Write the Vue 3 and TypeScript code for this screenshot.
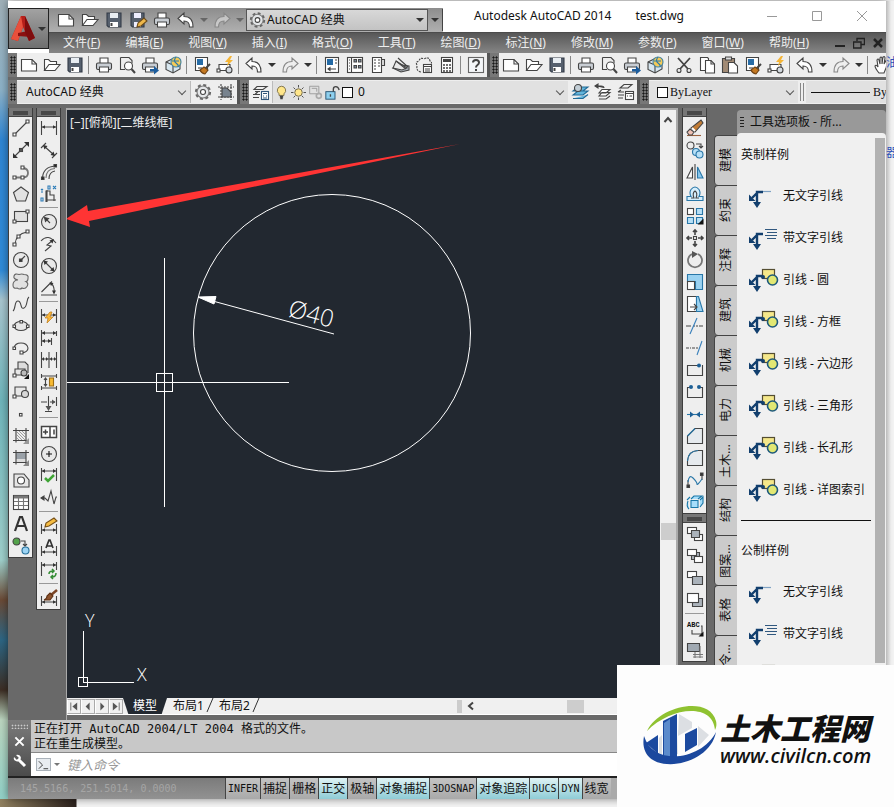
<script setup lang="ts">
import { ref } from 'vue'

const dim = '<path d="M1.500 2v14M16.500 2v14M2 8h14"/><path d="M2 8l3-1.800v3.600zM16 8l-3-1.800v3.600z" fill="#333" stroke="none"/>'
const dimLow = '<path d="M1.500 7v10M16.500 7v10M2 13h14"/><path d="M2 13l3-1.800v3.600zM16 13l-3-1.800v3.600z" fill="#333" stroke="none"/>'
const frame = '<path d="M4 1v14.500M14 1v14.500M1 3.500h16M1 13.500h16"/>'
const printer = '<path d="M5 7V2h8v5" fill="#fff"/><rect x="1.500" y="7" width="15" height="6.500" rx="1.500" fill="#c9ced4"/><path d="M4.500 11h9v5h-9z" fill="#fff"/>'
const leader = '<path d="M14 8H8v11M9 8L3 14" stroke="#123f6e" stroke-width="2.400"/><path d="M0 17V10.500l6.500 6.500zM8 24l-4-6h8z" fill="#123f6e" stroke="none"/>'
const boxA = '<rect x="1.500" y="2.500" width="9" height="6" fill="#fff"/>'
const boxB = '<rect x="8.500" y="9.500" width="8" height="6" fill="#fff"/>'

const icons: Record<string, string> = {
  new: '<path d="M1.500 3.500H12l4.500 4.500v7h-15z" fill="#fff"/><path d="M12 3.500V8h4.500"/>',
  open: '<path d="M1.500 14.500v-11h4l2 2h6v3" fill="#fff"/><path d="M1.500 14.500L6 8.500h11l-5 6z" fill="#fff"/>',
  save: '<path d="M2 2h14v14H3.500L2 14.500z" fill="#56606e" stroke="#333b47"/><path d="M5 2h8v5H5z" fill="#e8edf2" stroke="none"/><path d="M5 11h8v5H5z" fill="#fff" stroke="none"/><path d="M6.500 12v3" stroke-width="2"/>',
  saveas: '<path d="M2 2h13v14H3.500L2 14.500z" fill="#56606e" stroke="#333b47"/><path d="M5 2h7v5H5zM5 11h7v5H5z" fill="#eef" stroke="none"/><path d="M8 16l1-4 6-5 3 3-6 5z" fill="#eeb74a" stroke="#6b4b1c"/>',
  print: printer,
  preview: '<path d="M2.500 1.500H11l3 3v3M2.500 1.500v12H7" fill="none"/><circle cx="10.500" cy="10" r="4" fill="#fff"/><path d="M13.500 13l3.500 4" stroke-width="2"/>',
  publish: printer + '<path d="M9 13h4v-3l5 4.500-5 4v-3H9z" fill="#1c5c9c" stroke="none"/>',
  cube: '<path d="M2 6l7-3.500 7 2.500v8l-7 4-7-3.500z" fill="#d7e6ef"/><path d="M2 6l7 3v8M9 9l3-1.500"/><circle cx="12" cy="6" r="5" fill="#f5ca57" stroke="#4183a1"/><path d="M12 1q-3 4 0 6t2 4M8 5h7" stroke="#287aac"/>',
  match: '<path d="M2.500 1.500h12v13h-12z" fill="#fff"/><path d="M4 3h6v6H4z" fill="#276ca6" stroke="none"/><path d="M5 12h4"/><path d="M17 8l-5 5" stroke-width="2"/><path d="M11 11l4 3-3 4q-4-1-5-4z" fill="#c47820" stroke="#704315"/>',
  blockedit: '<path d="M3 8.500h11v6H3z" fill="#fff"/><circle cx="13" cy="14" r="3" fill="#d4dae0"/><rect x="1" y="13" width="3" height="3" fill="#fff"/><path d="M14 0l-5 6h3l-1 4 6-6h-3l2-4z" fill="#f5b536" stroke="none"/>',
  undo: '<path d="M1 7.500L7 2v3.500c6 0 9 3.500 9 10.500h-3.500c0-4.500-1.500-6-5.500-6V13z" fill="#fff"/>',
  redo: '<path d="M17 7.500L11 2v3.500c-6 0-9 3.500-9 10.500h3.500c0-4.500 1.500-6 5.500-6V13z" fill="#eee" fill-opacity=".5" stroke="#888"/>',
  props: '<rect x="2.500" y="1.500" width="13" height="15" fill="#fff"/><path d="M4 3h6v6H4z" fill="#246aa5" stroke="none"/><path d="M12 4h2M12 7h2M5 13h8M5 13l2-1.500v3z"/>',
  design: '<rect x="1.500" y="1.500" width="15" height="15" fill="#fff"/><path d="M5.500 2v14M3 4h1M3 7h1M3 10h1M3 13h1"/><path d="M8 3.500h2.500V6H8zM12.500 3.500H15V6h-2.500zM8 9.500h2.500V12H8zM12.500 9.500H15V12h-2.500z" fill="#7e91a5"/>',
  palette: '<path d="M3.500 1.500h9v15h-9z" fill="#fff"/><path d="M12.500 3.500h3v6h-3z" fill="#ddd"/><path d="M5 4h2M9 4h2M5 7h2M9 7h2M5 10h2M9 10h2M5 13h2"/>',
  sheets: '<path d="M1 12l9-3 7 1v4l-8 2z" fill="#b0b7bd"/><path d="M4 5l11 7-5 2-9-2z" fill="#e8e8e8"/><path d="M6 2l10 9M4 5l10 8"/>',
  markup: '<path d="M2 9q-2-3 2-4 1-4 5-2 5-3 6 2 3 1 0 4" stroke-dasharray="2 1"/><rect x="8.500" y="8.500" width="8" height="8" fill="#fff"/><path d="M9 10.500h7M10 13h5M10 15h5"/><path d="M2 10q-1 5 4 6" stroke-dasharray="2 1"/>',
  calc: '<rect x="3.500" y="1.500" width="11" height="15" fill="#fff"/><path d="M5 4.500h8" stroke-width="3"/><path d="M5 9h8M5 12h8M5 15h8" stroke-dasharray="2 1" stroke-width="1.500"/>',
  help: '<rect x="1.500" y="1.500" width="15" height="15" fill="#f4f6f8" stroke="#666"/><path d="M6 6.500Q6 4 9 4t3 2.500q0 1.500-1.500 2.500T9 11.500M9 13v2" stroke-width="2"/>',
  cut: '<path d="M3 2l10 11M15 2L5 13" stroke-width="1.800"/><circle cx="4" cy="14.500" r="2"/><circle cx="14" cy="14.500" r="2"/>',
  copyclip: '<path d="M2.500 1.500h7l1 1v12h-8z" fill="#fff"/><path d="M7.500 4.500H13l3.500 3.500v9h-9z" fill="#fff"/><path d="M13 4.500V8h3.500"/>',
  paste: '<path d="M1.500 2.500h12v14h-12z" fill="#a28b75"/><path d="M4.500 1h6v3h-6z" fill="#ddd"/><path d="M7.500 6.500H13l3.500 3.500v7h-9z" fill="#fff"/>',
  pan: '<path d="M5 17q-4-5-4-7 1-2 3 1L3 4q1-2 2 0l1 4V2q1-2 2 0v6l1-7q2-1 2 1l-1 6 3-5q2 0 1 2l-2 7-2 5z" fill="#fff"/>',
  gear: '<circle cx="9" cy="9" r="7" stroke-dasharray="3 2.500" stroke-width="2.200" stroke="#666"/><circle cx="9" cy="9" r="6" fill="#e4e6e8" stroke="#777"/><circle cx="9" cy="9" r="2.500" fill="#fff"/>',
  wssave: '<path d="M1 4h16M1 14h16M4 1v16M14 1v16" stroke-dasharray="2 1"/><path d="M5 5h5l4 4v5H5z" fill="#78838e"/>',
  layers: '<path d="M5 3.500h10l-4 3H2zM3 8.500h5M1 11.500h7M1 14.500h6M3 11.500l3-3"/><rect x="9.500" y="8.500" width="7" height="8" fill="#fff" stroke="#315579"/><path d="M11 10.500h4M11 13h1M14 13h1M11 15h4" stroke="#315579"/>',
  bulb: '<path d="M9 1.500a5 5 0 0 1 3 9v2H6v-2a5 5 0 0 1 3-9z" fill="#ffe68a" stroke="#7b6e48"/><path d="M7 14h4M7.500 16h3" stroke-width="2"/>',
  sun: '<path d="M9 0v3M9 15v3M0 9h3M15 9h3M3 3l2 2M13 13l2 2M15 3l-2 2M3 15l2-2"/><circle cx="9" cy="9" r="4.500" fill="#ffe68a" stroke="#6f6547"/>',
  vpfreeze: '<path d="M2 1.500h11v9H2z" stroke="#999"/><path d="M4.500 4h6v4" stroke="#999"/><circle cx="13" cy="13" r="3" stroke="#aaa" stroke-width="2"/>',
  lock: '<rect x="1" y="8" width="11" height="9" fill="#8ed0ef" stroke="#245272"/><path d="M10 8V5q0-3 3-3t4 4M6.500 11v3" stroke-width="1.600"/>',
  layercur: '<path d="M2 12h10l5-4H7zM2 15.500h10l5-4M2 8h10l5-4H7z" fill="#64b6dc" stroke="#226a96"/><circle cx="7" cy="5" r="3.500" fill="#c3cfd7"/>',
  layerprev: '<path d="M5 13h7l4-3.500H8zM5 16h7l4-3M5 10h7l4-3.500H8z" fill="#fff"/><path d="M1 3h6q3 0 3 2M1 3l3-2v4z" fill="#333"/>',
  layerstate: '<path d="M3 5h8l4-3.500H7zM2 9h5M1 12h6M1 9l3-2M1 15h5"/><rect x="8.500" y="8.500" width="8" height="8" fill="#fff"/><path d="M8.500 10.500h8M10 13h1M12.500 13H15"/>',
  line: '<path d="M3 15L15 3"/><path d="M1 14h3v3H1zM14 1h3v3h-3z" fill="#fff"/>',
  xline: '<path d="M2 16L16 2"/><path d="M1 17v-5l5 5zM17 1v5l-5-5z" fill="#333" stroke="none"/><rect x="7.500" y="7.500" width="3" height="3" fill="#555"/>',
  pline: '<path d="M3 14.500h8q5 0 5-4.500t-5-5" stroke-width="1.800" stroke="#777"/><path d="M1 13h3v3H1zM9 13h3v3H9zM9 3h3v3H9z" fill="#fff"/>',
  polygon: '<path d="M9 2l7.500 5.500L13.500 16h-9L1.500 7.500z" fill="#e2e2e2"/>',
  rect: '<rect x="2.500" y="4.500" width="13" height="10" fill="#e0e0e0"/><path d="M1 13h3v3H1zM14 3h3v3h-3z" fill="#fff"/>',
  arc: '<path d="M3 15Q4 5 15 3"/><path d="M1 14h3v3H1zM14 1h3v3h-3zM5 6h3v3H5z" fill="#fff"/>',
  circle: '<circle cx="9" cy="9" r="7.500" fill="#e9e9e9"/><path d="M9 9l4-4"/><path d="M7.500 8h2.500v2.500H7.500z" fill="#333"/>',
  cloud: '<path d="M6 7Q1 6 2 3t5-1.500q3-1 5 0 5 0 4 4 0 3-2 3 3 2 1 5t-5 1.500q-2 2-5 0-4 1-4-3 0-4 4-5z" fill="#e1e1e1" stroke="#666"/>',
  spline: '<path d="M1 16C4 14 2 6 6 6s2 9 6 7 2-9 5-11"/>',
  ellipse: '<ellipse cx="9" cy="9" rx="7" ry="4.500" fill="#e7e7e7"/><path d="M1 8h2.500v2.500H1zM14.500 8H17v2.500h-2.500zM8 3.500h2.500V6H8z" fill="#fff"/>',
  ellarc: '<path d="M2 9q1-5 7-5t7 5q0 4-6 5"/><path d="M1 8h2.500v2.500H1zM8 12h3v3H8z" fill="#fff"/>',
  insert: '<path d="M6 8V1h7l3 3v8" fill="#ddd"/><path d="M3 8h10v6H3z" fill="#e8e8e8"/><circle cx="12" cy="12" r="3" fill="#bbb"/><path d="M1 13h3v3H1z" fill="#fff"/><path d="M17 13v5h-5z" fill="#111" stroke="none"/>',
  block: '<path d="M3 4h11v9H3z" fill="#e8e8e8"/><circle cx="13" cy="11" r="3.500" fill="#d8d8d8"/><path d="M1 12h3v3H1z" fill="#fff"/>',
  point: '<rect x="7.500" y="8.500" width="2.500" height="2.500" fill="#fff"/>',
  hatch: frame + '<path d="M4 4l9 9M7 4l7 7M10 4l4 4M4 7l6 6M4 10l3 3" stroke="#888" stroke-width=".8"/><path d="M11 17h6v-6z" fill="#999" stroke="none"/>',
  gradient: '<path d="M4 4h10v9H4z" fill="#9aa1a8" stroke="none"/><path d="M4 10h10v3H4z" fill="#ddd" stroke="none"/>' + frame + '<path d="M11 17h6v-6z" fill="#888" stroke="none"/>',
  region: '<path d="M2 3h10l5 6v7H2z" fill="#e6e6e6"/><circle cx="9" cy="9.500" r="3.500" fill="#fff"/>',
  table: '<rect x="1.500" y="2.500" width="15" height="14" fill="#fff"/><path d="M2 4h14" stroke="#777" stroke-width="3"/><path d="M2 8.500h14M2 12.500h14M6.500 5v11M11.500 5v11" stroke="#777"/>',
  mtext: '<path d="M3 16L8 2h2l5 14M5 11h8" stroke="#333" stroke-width="2.200"/>',
  addsel: '<circle cx="4.500" cy="4.500" r="3.500" fill="#53a34b"/><circle cx="13.500" cy="13.500" r="3.500" fill="#9dd4f4" stroke="#25709b"/><path d="M9 4h4v4M11 7l2 2 2-2"/>',
  dimlin: dim,
  dimali: '<path d="M4 5l10 9M1 7l5-5M12 17l5-5"/><path d="M3 4l4.500 1-3 3.500zM15 15l-4.500-1 3-3.500z" fill="#333" stroke="none"/>',
  dimarc: '<path d="M2.500 15Q3 4 15 3M9 16Q9 9 15 8"/><path d="M6 15Q6 6 15 5.500" stroke="#777"/><path d="M1.500 14H4v2.500H1.500zM14 1.500h2.500V4H14z" fill="#222"/>',
  dimord: '<path d="M6 17V6h4v4h4v6M6 15h10M7 5v12"/><path d="M2 5v3M1 4l1 1 1-1M8 1h2v3H8zM13 1l3 3M16 1l-3 3M1 13h2v3H1z" stroke="#2f7db8"/>',
  dimrad: '<circle cx="9" cy="9" r="7.500" fill="#e8e8e8"/><path d="M10 10L5 5"/><path d="M4.500 4.500l4 1-3 3z" fill="#333"/>',
  dimjog: '<path d="M1 6q7-8 15 2M5 16l6-5-4-1 6-5"/><path d="M14 4l-1.500 4.500-3-3z" fill="#333" stroke="none"/>',
  dimdia: '<circle cx="9" cy="9" r="7.500" fill="#e8e8e8"/><path d="M4.500 4.500l9 9"/><path d="M3.500 3.500l4.500 1-3.500 3.500zM14.500 14.500L10 13.500l3.500-3.500z" fill="#333" stroke="none"/>',
  dimang: '<path d="M1 16h16M1.500 13L12 2.500M11 4q4 4 3 10"/><path d="M9.500 3.500l4 .500-2.500 3zM12 11.500h4l-2 4z" fill="#333" stroke="none"/>',
  dimquick: dim + '<path d="M10 5l-5 6h3l-1 5 6-6h-3l2-5z" fill="#fbb83a" stroke="#bc7816" stroke-width=".7"/>',
  dimbase: '<path d="M1.500 1v16M16.500 2v5M11.500 9v7M2 4h14M2 12h9"/><path d="M2 12l3-2v4zM11 12l-3-2v4zM2 4l3-2v4zM16 4l-3-2v4z" fill="#333" stroke="none"/>',
  dimcont: '<path d="M1.500 1v16M9 1v16M16.500 1v16M2 8h15"/><path d="M2 8l2-2v4zM8 8L6 6v4zM10 8l2-2v4zM16 8l-2-2v4z" fill="#333" stroke="none"/>',
  dimspace: '<path d="M1.500 1v4M16.500 1v4M2 3h15M1.500 13v4M16.500 13v4M2 15h15M5.500 5v8M4 7l1.500-2L7 7M4 11l1.500 2L7 11"/><path d="M9.500 5h4v8h-4z" fill="#f8bb32" stroke="#9b6d15"/>',
  dimbreak: '<path d="M8.500 1v13M1 7h6M10 7h5M16.500 2v9M5 16.500h7"/><path d="M5.500 11h6l-3 5zM12 4.500L15.500 7 12 9.500z" fill="#555" stroke="none"/>',
  tol: '<rect x="1.500" y="3.500" width="15" height="11" fill="#fff" stroke-width="1.500"/><path d="M10 4v10M3 9h5M5.500 6.500v5M14 6.500v5" stroke-width="1.500"/>',
  center: '<circle cx="9" cy="9" r="7.500" fill="#e8e8e8"/><path d="M9 6v6M6 9h6" stroke="#111"/>',
  inspect: '<path d="M1.500 1v13M16.500 1v13M2 4h14"/><path d="M2 4l3-2v4zM16 4l-3-2v4z" fill="#333" stroke="none"/><path d="M5 11l3 3 6-6" stroke="#3fa535" stroke-width="2.500"/>',
  jogline: '<path d="M1 9h4l3 3 3-10 3 13 2-7h1"/><path d="M1 9l3-2v4z" fill="#333"/>',
  dimedit: dimLow + '<path d="M5 10l1-4 8-5 3 3-8 5z" fill="#f6bd43" stroke="#765018"/>',
  dimtedit: dimLow + '<path d="M6 9l3-8h1l3 8M7 7h5" stroke="#333" stroke-width="1.700"/>',
  dimupd: '<path d="M1.500 1v14M16.500 1v8M2 4h14"/><path d="M2 4l3-2v4zM16 4l-3-2v4z" fill="#333" stroke="none"/><path d="M9 13q0-3 4-3M16 12q0 4-4 4M12 8l2 2-2 2M13 14l-2 2 2 2" stroke="#338c33" stroke-width="1.500"/>',
  dimstyle: dimLow + '<path d="M17 1l-6 5" stroke="#7a4424" stroke-width="2.500"/><path d="M10 4l3 3-3 4H4q3-1 3-4z" fill="#8d532d" stroke="#5e3115"/>',
  erase: '<path d="M1 16.500h14" stroke="#9b603d"/><path d="M4 10l4 3-2 3H3l-2-3z" fill="#f0c2b5"/><path d="M5 9l4 4 8-9-2-3z" fill="#c27c35"/><path d="M6 9l3 3" stroke="#fff" stroke-width="2"/>',
  copy: '<circle cx="4.500" cy="4.500" r="3.500" fill="#eee"/><circle cx="10" cy="11" r="3.500" fill="#b7e0f7" stroke="#2977a8"/><circle cx="13.500" cy="13.500" r="3.500" fill="#b7e0f7" stroke="#2977a8"/><path d="M10 3h5v3M13 5l2 2 2-2"/>',
  mirror: '<path d="M6.500 4v11H1z" fill="#fff"/><path d="M11.500 4v11H17z" fill="#8ac7ed" stroke="#2977a8"/><path d="M9 1v16"/>',
  offset: '<path d="M1 15.500h16v-4h-4q2-4 0-7-4-5-8 0-2 3 0 7H1z" fill="#d5eefc" stroke="#2977a8"/><path d="M5 13h3q-2-5 1-7 3 2 1 7h3"/>',
  array: '<rect x="1.500" y="1.500" width="6" height="6" fill="#fff"/><path d="M10.500 1.500h6v6h-6zM1.500 10.500h6v6h-6zM10.500 10.500h6v6h-6z" fill="#b7e0f7" stroke="#2977a8"/><path d="M17.500 11.500v6h-6z" fill="#111" stroke="none"/>',
  move: '<path d="M9 1v5M9 12v5M1 9h5M12 9h5M7 3l2-2 2 2M7 15l2 2 2-2M3 7L1 9l2 2M15 7l2 2-2 2" stroke-width="1.600"/><rect x="7.500" y="7.500" width="3" height="3"/>',
  rotate: '<path d="M6 3a7 7 0 1 0 6 0" stroke="#777" stroke-width="1.800"/><path d="M6 0l6 3-6 4z" fill="#555" stroke="none"/>',
  scale: '<path d="M1.500 1.500h15v15h-7v-8h-8z" fill="#9bd2f1" stroke="#2977a8"/><rect x="1.500" y="8.500" width="7" height="8" fill="#fff"/>',
  stretch: '<path d="M1.500 1.500h9v15h-9z" fill="#fff"/><path d="M10.500 1.500h2l4.500 15h-6.500z" fill="#9bd2f1" stroke="#2977a8"/><path d="M4 12h7M8 9l3 3-3 3"/>',
  trim: '<path d="M0 9h5M13 9h4" /><path d="M7 9h5" stroke-dasharray="2 1"/><path d="M11 1L4 17" stroke="#3a80bb"/>',
  extend: '<path d="M0 9h5M6 9h6" stroke-dasharray="3 1"/><path d="M16 2l-5 14" stroke="#3a80bb"/>',
  breakpt: '<path d="M12 4.500H1.500v10h15V4" fill="#eee"/><circle cx="13" cy="4.500" r="2" fill="#1d5f95" stroke="none"/>',
  break: '<path d="M5 4.500H1.500v10h15v-10H13" fill="#eee"/><circle cx="5" cy="4" r="2" fill="#1d5f95" stroke="none"/><circle cx="13" cy="4" r="2" fill="#1d5f95" stroke="none"/>',
  join: '<path d="M1 9.500h16" stroke="#2977a8"/><path d="M8 9.500L4 6.500v6zM10 9.500l4-3v6z" fill="#1d5f95" stroke="none"/>',
  chamfer: '<path d="M1.500 16.500V9L9 1.500h7.500v15z" fill="#e6eaee"/><path d="M1.500 9L9 1.500" stroke="#2977a8"/>',
  fillet: '<path d="M1.500 16.500V12Q2 2 12 1.500h4.500v15z" fill="#e6eaee"/><path d="M1.500 12Q2 2 12 1.500" stroke="#2977a8"/>',
  blend: '<path d="M2 16V9M16 9V2"/><path d="M2 11q1-8 5-4t4 6 5-5" stroke="#2977a8"/><path d="M1 14h2.500v2.500H1zM14.500 2H17v2.500h-2.500z" fill="#333"/>',
  explode: '<path d="M5 7.500h7v7H5zM5 6l3-3h8l-4 3M14 14l3-4V4l-3 3M2 8q-2 5 1 8M1 7l3-3" fill="#a6ddfa" stroke="#1877a8"/>',
  front: boxA + boxB + '<path d="M5.500 5.500h8v7h-8z" fill="#aab2ba"/>',
  back: '<path d="M5.500 5.500h8v7h-8z" fill="#aab2ba"/>' + boxA + boxB,
  above: boxA + '<path d="M6.500 7.500h10v8h-10z" fill="#aab2ba"/>',
  under: '<path d="M6.500 7.500h10v8h-10z" fill="#aab2ba"/><rect x="1.500" y="2.500" width="11" height="9" fill="#fff"/>',
  textfront: '<text x="1" y="8" font-family="Liberation Mono" font-size="7" font-weight="bold" fill="#111" stroke="none">ABC</text><path d="M15 7h1v8H6v-4"/><path d="M17.500 12.500v5h-5z" fill="#111" stroke="none"/>',
  hatchback: '<path d="M1.500 2.500h12v8h-12z" fill="#a0a9b2"/><path d="M7 13.500h10M9 11v6M14 5v12M7 16h10" stroke="#777"/>',
  lead: leader + '<path d="M14 7.500h8" stroke="#7fa2c4"/>',
  leadtext: leader + '<path d="M16 3.500h12M18 6.500h10M16 9.500h12M18 12.500h9" stroke="#31587f"/>',
  leadshape: leader + '<rect x="13.500" y="1.500" width="12" height="9" fill="#f5e88a" stroke="#554e32"/><circle cx="23.500" cy="12" r="5" fill="#e2e873" stroke="#1d597b" stroke-width="1.600"/><circle cx="14" cy="9" r="2" fill="#123f6e" stroke="none"/>',
}

const menus = [['文件', 'F'], ['编辑', 'E'], ['视图', 'V'], ['插入', 'I'], ['格式', 'O'], ['工具', 'T'], ['绘图', 'D'], ['标注', 'N'], ['修改', 'M'], ['参数', 'P'], ['窗口', 'W'], ['帮助', 'H']]
const quick = ['new', 'open', 'save', 'saveas', 'print', 'undo', 'v', 'redo', 'v']
const common = ['new', 'open', 'save', '|', 'print', 'preview', 'publish', 'cube', '|']
const history = ['|', 'undo', 'v', 'redo', 'v', '|']
const std1 = [...common, 'match', 'blockedit', ...history, 'props', 'design', 'palette', 'sheets', 'markup', 'calc', '|', 'help']
const std2 = [...common, 'cut', 'copyclip', 'paste', 'match', 'blockedit', ...history, 'pan']
const drawTools = ['line', 'xline', 'pline', 'polygon', 'rect', 'arc', 'circle', 'cloud', 'spline', 'ellipse', 'ellarc', 'insert', 'block', 'point', 'hatch', 'gradient', 'region', 'table', 'mtext', 'addsel']
const dimTools = ['dimlin', 'dimali', 'dimarc', 'dimord', '|', 'dimrad', 'dimjog', 'dimdia', 'dimang', '|', 'dimquick', 'dimbase', 'dimcont', 'dimspace', 'dimbreak', '|', 'tol', 'center', 'inspect', 'jogline', '|', 'dimedit', 'dimtedit', 'dimupd', '|', 'dimstyle']
const modTools = ['erase', 'copy', 'mirror', 'offset', 'array', 'move', 'rotate', 'scale', 'stretch', 'trim', 'extend', 'breakpt', 'break', 'join', 'chamfer', 'fillet', 'blend', 'explode']
const orderTools = ['front', 'back', 'above', 'under', '|', 'textfront', 'hatchback']
const paletteTabs = ['建模', '约束', '注释', '建筑', '机械', '电力', '土木...', '结构', '图案...', '表格', '命令...']
const imperial = [['lead', '无文字引线'], ['leadtext', '带文字引线'], ['leadshape', '引线 - 圆'], ['leadshape', '引线 - 方框'], ['leadshape', '引线 - 六边形'], ['leadshape', '引线 - 三角形'], ['leadshape', '引线 - 长孔形'], ['leadshape', '引线 - 详图索引']]
const metric = imperial.slice(0, 3)
const modes = ref([
  { t: 'INFER', on: false, latin: true }, { t: '捕捉', on: false }, { t: '栅格', on: false }, { t: '正交', on: true },
  { t: '极轴', on: false }, { t: '对象捕捉', on: true }, { t: '3DOSNAP', on: false, latin: true }, { t: '对象追踪', on: true },
  { t: 'DUCS', on: true, latin: true }, { t: 'DYN', on: true, latin: true }, { t: '线宽', on: false },
])
const command = ref('')
</script>

<template>
  <div class="desktop">
    <div class="window">
      <header class="top">
        <button class="appbtn" aria-label="应用程序菜单">
          <svg width="24" height="28" viewBox="0 0 24 28"><path d="M10 1h4l10 22-6 3-6-14-5 14-7-2z" fill="#b51f1a" /><path d="M10 1l2 11-5 14-7-2z" fill="#e9503c" /><path d="M7 18l10-2 3 6-13-1z" fill="#8b1010" /><path d="M14 1l10 22-6 3-4-9z" fill="#7e0c0d" /></svg>
          <i class="tri"></i>
        </button>
        <div class="topmain">
          <div class="titlebar">
            <div class="quick">
              <template v-for="(t, i) in quick" :key="i">
                <button v-if="t === 'v'" class="drop dim" aria-label="展开"><i class="tri"></i></button>
                <button v-else class="qbtn" :aria-label="t"><svg class="ico" viewBox="0 0 18 18" v-html="icons[t]"></svg></button>
              </template>
              <div class="wsbox">
                <svg class="ico" viewBox="0 0 18 18" v-html="icons.gear"></svg>
                <select aria-label="工作空间"><option>AutoCAD 经典</option></select>
                <i class="tri"></i>
              </div>
              <button class="more" aria-label="自定义"><i class="tri"></i></button>
            </div>
            <h1><span>Autodesk AutoCAD 2014</span><span>test.dwg</span></h1>
            <div class="winbtns">
              <button aria-label="最小化"><svg viewBox="0 0 12 12"><path d="M1 6.500h10" /></svg></button>
              <button aria-label="最大化"><svg viewBox="0 0 12 12"><path d="M1.500 1.500h9v9h-9z" /></svg></button>
              <button aria-label="关闭"><svg viewBox="0 0 12 12"><path d="M1 1l10 10M11 1L1 11" /></svg></button>
            </div>
          </div>
          <nav class="menubar">
            <button v-for="m in menus" :key="m[1]">{{ m[0] }}(<u>{{ m[1] }}</u>)</button>
            <div class="docbtns">
              <button aria-label="最小化文档"><svg viewBox="0 0 12 12"><path d="M1 9h10" stroke-width="2" /></svg></button>
              <button aria-label="还原文档"><svg viewBox="0 0 12 12"><path d="M4 4V1.500h7.500v6H8M.5 5h7.500v6H.5z" /></svg></button>
              <button aria-label="关闭文档"><svg viewBox="0 0 12 12"><path d="M2 2l8 8M10 2l-8 8" stroke-width="2.500" /></svg></button>
            </div>
          </nav>
        </div>
      </header>

      <div class="bar">
        <template v-for="(set, s) in [std1, std2]" :key="s">
          <i class="grip"></i>
          <div class="strip" :class="{ fill: s === 1 }">
            <template v-for="(t, i) in set" :key="i">
              <i v-if="t === '|'" class="sep"></i>
              <button v-else-if="t === 'v'" class="drop" aria-label="展开"><i class="tri"></i></button>
              <button v-else class="tbtn" :aria-label="t"><svg class="ico" viewBox="0 0 18 18" v-html="icons[t]"></svg></button>
            </template>
          </div>
        </template>
      </div>

      <div class="bar">
        <i class="grip"></i>
        <div class="strip">
          <div class="combo ws"><select aria-label="工作空间列表"><option>AutoCAD 经典</option></select><i class="chev"></i></div>
          <button v-for="t in ['gear', 'wssave']" :key="t" class="tbtn" :aria-label="t"><svg class="ico" viewBox="0 0 18 18" v-html="icons[t]"></svg></button>
        </div>
        <i class="grip"></i>
        <div class="strip fill">
          <button class="tbtn" aria-label="图层特性"><svg class="ico" viewBox="0 0 18 18" v-html="icons.layers"></svg></button>
          <div class="combo layer">
            <svg v-for="t in ['bulb', 'sun', 'vpfreeze', 'lock']" :key="t" class="ico small" viewBox="0 0 18 18" v-html="icons[t]"></svg>
            <i class="swatch"></i>
            <select aria-label="图层"><option>0</option></select><i class="chev"></i>
          </div>
          <button v-for="t in ['layercur', 'layerprev', 'layerstate']" :key="t" class="tbtn" :aria-label="t"><svg class="ico" viewBox="0 0 18 18" v-html="icons[t]"></svg></button>
        </div>
        <i class="grip"></i>
        <div class="strip props">
          <div class="combo color"><i class="swatch"></i><select aria-label="颜色"><option>ByLayer</option></select><i class="chev"></i></div>
          <i class="sep double"></i>
          <div class="combo ltype"><i class="rule"></i><select aria-label="线型"><option>ByLayer</option></select></div>
        </div>
      </div>

      <main>
        <div class="docks">
          <div v-for="(set, s) in [drawTools, dimTools]" :key="s" class="vbar">
            <i class="vgrip"></i>
            <template v-for="(t, i) in set" :key="i">
              <i v-if="t === '|'" class="vsep"></i>
              <button v-else :aria-label="t"><svg class="ico" viewBox="0 0 18 18" v-html="icons[t]"></svg></button>
            </template>
          </div>
        </div>

        <section class="doc">
          <div class="view">
            <div class="canvas">
              <p class="viewlabel">[−][俯视][二维线框]</p>
              <svg class="drawing">
                <circle cx="265" cy="223" r="138.500" />
                <path d="M131 187L267 224" />
                <path d="M131 187l18-.500-2 7.500z" fill="#fff" />
                <text x="220" y="206" transform="rotate(15 220 206)">Ø40</text>
                <g shape-rendering="crispEdges"><path d="M97.500 148v249M0 272.500h222M89.500 263.500h16v18h-16z" /></g>
                <path d="M-1 109L20 95l1 6L393 34 22 111l1 6z" fill="#ff3434" stroke="none" />
              </svg>
              <svg class="ucs" width="90" height="96" viewBox="0 0 90 96">
                <path d="M6.500 29v51h50M1.500 75.500h9v9h-9z" shape-rendering="crispEdges" />
                <text x="8" y="25">Y</text><text x="60" y="79">X</text>
              </svg>
            </div>
            <div class="vscroll"><svg viewBox="0 0 10 10" width="10" height="10"><path d="M1.500 7L5 3l3.500 4" /></svg><i></i></div>
          </div>
          <div class="tabs">
            <button class="nav" aria-label="第一个"><svg viewBox="0 0 10 10"><path d="M1 0v10" stroke="#555" /><path d="M9 0v10L3 5z" /></svg></button>
            <button class="nav" aria-label="上一个"><svg viewBox="0 0 10 10"><path d="M7 0v10L2 5z" /></svg></button>
            <button class="nav" aria-label="下一个"><svg viewBox="0 0 10 10"><path d="M3 0v10l5-5z" /></svg></button>
            <button class="nav" aria-label="最后一个"><svg viewBox="0 0 10 10"><path d="M9 0v10" stroke="#555" /><path d="M1 0v10l6-5z" /></svg></button>
            <button class="tab on">模型</button>
            <button class="tab">布局1</button><svg class="slash" viewBox="0 0 8 16"><path d="M7 0L1 14" /></svg>
            <button class="tab">布局2</button><svg class="slash" viewBox="0 0 8 16"><path d="M7 0L1 14" /></svg>
            <div class="hscroll"><i class="split"></i><svg viewBox="0 0 10 10" width="10" height="10"><path d="M7 1.500L3 5l4 3.500" /></svg><i class="thumb"></i></div>
          </div>
        </section>

        <div class="docks right">
          <div class="stack">
            <div v-for="(set, s) in [modTools, orderTools]" :key="s" class="vbar">
              <i class="vgrip"></i>
              <template v-for="(t, i) in set" :key="i">
                <i v-if="t === '|'" class="vsep"></i>
                <button v-else :aria-label="t"><svg class="ico" viewBox="0 0 18 18" v-html="icons[t]"></svg></button>
              </template>
            </div>
          </div>
        </div>

        <aside class="palette">
          <div class="ptabs"><button v-for="t in paletteTabs" :key="t"><span>{{ t }}</span></button></div>
          <div class="pbody">
            <h2><i class="dots"></i>工具选项板 - 所...</h2>
            <div class="pscroll">
              <div class="plist">
                <h3>英制样例</h3>
                <button v-for="m in imperial" :key="m[1]"><svg class="lico" viewBox="0 0 30 24" v-html="icons[m[0]]"></svg>{{ m[1] }}</button>
                <hr>
                <h3>公制样例</h3>
                <button v-for="m in metric" :key="m[1]"><svg class="lico" viewBox="0 0 30 24" v-html="icons[m[0]]"></svg>{{ m[1] }}</button>
              </div>
              <div class="ptrack"><i></i></div>
            </div>
          </div>
        </aside>
      </main>

      <section class="cmd">
        <div class="cmdside">
          <i class="dotrow"></i>
          <button aria-label="关闭"><svg viewBox="0 0 12 12" width="11" height="11"><path d="M1.500 1.500l9 9M10.500 1.500l-9 9" stroke-width="2.200" /></svg></button>
          <button aria-label="设置"><svg viewBox="0 0 14 14" width="14" height="14"><path d="M5 5l7 7" stroke-width="3" /><path d="M1 3l3 3 2-2-3-3q4-1 5 3-2 5-5 3-3-1-2-4z" fill="#fff" stroke="none" /></svg></button>
        </div>
        <div class="cmdmain">
          <div class="log"><p>正在打开 AutoCAD 2004/LT 2004 格式的文件。</p><p>正在重生成模型。</p></div>
          <div class="prompt">
            <button aria-label="最近使用的命令"><svg viewBox="0 0 14 12" width="14" height="12"><path d="M2 2l4 4-4 4M7 10h5" /></svg></button>
            <i class="tri"></i>
            <input v-model="command" aria-label="命令" placeholder="键入命令">
          </div>
        </div>
      </section>

      <footer class="status">
        <output>145.5166, 251.5014, 0.0000</output>
        <button v-for="m in modes" :key="m.t" :class="{ on: m.on, latin: m.latin }" @click="m.on = !m.on">{{ m.t }}</button>
      </footer>
    </div>

    <div class="behind"><a href="#">油</a><a href="#">器</a></div>

    <div class="brand">
      <svg width="76" height="64" viewBox="0 0 76 64">
        <path d="M21 17l14-7v43H21z" fill="#1c4a9f" /><path d="M22 19l6-4v38h-6z" fill="#5c8bcc" />
        <path d="M37 10l13 8v6l-14 8v18h-1z" fill="#dcdfe3" /><path d="M56 22l11 9-11 12z" fill="#dcdfe3" />
        <path d="M43 30l12-6v17l-12 7z" fill="#1c4a9f" /><path d="M4 39l12-8v19z" fill="#1c4a9f" /><path d="M17 34l3-3v21h-3z" fill="#dcdfe3" />
        <path d="M5 27C17 2 67-9 74 17c1 4 0 7-1 9C71-2 28 3 5 27z" fill="#8fc231" />
        <path d="M2 32c-8 42 65 34 72-4C61 55 12 64 2 32z" fill="#1b489e" />
      </svg>
      <div class="brandtext"><strong>土木工程网</strong><span>www.civilcn.com</span></div>
    </div>
  </div>
</template>

<style>
html, body { margin: 0; overflow: hidden; }
</style>

<style scoped>
.desktop {
  position: relative; display: flex; height: 100vh; min-height: 500px; box-sizing: border-box; padding: 1px 0 8px 8px; overflow: hidden;
  background: linear-gradient(90deg, #8f7f5f 0, #2b211d 76px, #f4f4f4 77px) left bottom / 100% 8px no-repeat,
    linear-gradient(#9fb0b8 0, #8db2c8 90px, #2f86d4 140px, #2f8bd9 270px, #a9c6cf 300px, #6fb5bb 400px, #9fd0cc 560px, #6a4a36 600px, #2d6684 640px, #3d2e24 690px, #bcd6c0 720px, #8dd0c8 807px) left top / 8px 100% no-repeat, #eee;
  font: 12px/16px "Noto Sans", "Noto Sans CJK SC", sans-serif; color: #111;
}
.window { flex: 1; min-width: 0; display: flex; flex-direction: column; background: #696969; box-shadow: 0 0 8px #0007; overflow: hidden; }
button { border: 0; padding: 0; margin: 0; background: none; color: inherit; font: inherit; display: flex; align-items: center; justify-content: center; flex: none; }
select { appearance: none; border: 0; background: none; padding: 0; margin: 0; font: inherit; color: inherit; min-width: 0; flex: 1; outline: 0; }
p, h1, h2, h3 { margin: 0; font: inherit; }
i { display: block; flex: none; }
.ico { width: 18px; height: 18px; fill: none; stroke: #444; stroke-width: 1.1; flex: none; display: block; overflow: visible; }
.ico.small { width: 15px; height: 15px; }
.tri { width: 0; height: 0; border: 4px solid transparent; border-top-color: #333; border-bottom: 0; }

.top { display: flex; background: #fff; padding-top: 7px; flex: none; }
.appbtn { width: 41px; height: 41px; border: 1px solid #222; background: linear-gradient(#a2a2a2, #6f6f6f); gap: 3px; box-sizing: border-box; }
.topmain { flex: 1; min-width: 0; }
.titlebar { display: flex; height: 24px; }
.quick { display: flex; align-items: center; width: 394px; flex: none; background: linear-gradient(#8d8d8d, #b0b0b0); box-sizing: border-box; padding-left: 5px; }
.qbtn { width: 24px; height: 24px; }
.drop { width: 13px; height: 22px; }
.quick .drop { width: 12px; }
.quick .drop.dim .tri { border-top-color: #666; }
.wsbox { flex: 1; display: flex; align-items: center; height: 22px; border: 1px solid #555; box-sizing: border-box; padding: 0 3px 0 2px; background: linear-gradient(#d8d8d8, #c3c3c3); }
.wsbox .ico { width: 17px; }
.wsbox select { padding-left: 1px; }
.more { width: 15px; height: 22px; border-right: 1px solid #444; }
h1 { flex: 1; display: flex; gap: 24px; padding: 0 0 8px 31px; line-height: 16px; white-space: nowrap; }
.winbtns { display: flex; gap: 33px; padding: 2px 18px 0 0; }
.winbtns button { width: 12px; height: 12px; }
.winbtns svg { width: 12px; height: 12px; fill: none; stroke: #999; }
.menubar { display: flex; align-items: center; gap: 25px; height: 21px; padding: 0 5px 0 14px; background: linear-gradient(#575757, #858585); color: #eee; border-top: 1px solid #4c4c4c; box-sizing: border-box; }
.menubar > button { white-space: nowrap; }
.docbtns { display: flex; gap: 7px; margin-left: auto; }
.docbtns button, .docbtns svg { width: 12px; height: 12px; fill: none; stroke: #222; stroke-width: 1.4; }

.bar { display: flex; height: 24px; flex: none; background: #5c5c5c; margin-bottom: 3px; overflow: hidden; }
.grip { width: 9px; background: radial-gradient(circle, #1a1a1a 40%, transparent 60%) 0 0 / 3px 3px content-box, #777; padding: 3px 1px 3px 2px; box-sizing: border-box; }
.bar .grip:not(:first-child) { width: 12px; border-left: 3px solid #555; }
.strip { display: flex; align-items: center; background: #eee; flex: none; }
.strip.fill { flex: 1; min-width: 0; }
.tbtn { width: 23px; height: 22px; }
.sep { width: 1px; height: 18px; background: #888; margin: 0 3px 0 2px; }
.sep.double { border: solid #888; border-width: 0 1px; background: none; width: 2px; margin: 0 2px; }
.combo { display: flex; align-items: center; background: #e1e1e1; height: 22px; box-sizing: border-box; padding: 0 5px; gap: 2px; flex: none; }
.combo.ws { width: 174px; padding-left: 9px; border-right: 1px solid #bbb; }
.combo.layer { flex: 1; min-width: 0; border-left: 1px solid #bbb; padding-left: 1px; }
.combo.layer select { padding-left: 3px; }
.combo.color { width: 149px; padding-left: 8px; }
.combo.color, .combo.ltype { font-family: "Liberation Serif", serif; }
.combo.ltype { width: 80px; padding-right: 0; }
.strip.props { flex: none; }
.chev { width: 5px; height: 5px; border: solid #555; border-width: 0 1px 1px 0; transform: rotate(45deg); margin-bottom: 3px; }
.swatch { width: 9px; height: 9px; border: 1px solid #111; background: #fff; }
.rule { width: 59px; height: 1px; background: #111; margin-right: 1px; }

main { flex: 1; min-height: 0; display: flex; }
.docks { display: flex; align-items: flex-start; gap: 3px; padding: 1px 5px 0 0; flex: none; }
.docks.right { padding: 1px 7px 0 4px; }
.stack { display: flex; flex-direction: column; }
.vbar { width: 25px; box-sizing: border-box; border: 1px solid #3d3d3d; border-top: 0; background: #eee; }
.vgrip { height: 9px; border-bottom: 1px solid #444; background: radial-gradient(circle, #1a1a1a 40%, transparent 60%) 0 0 / 2px 2px content-box, #777; padding: 3px 4px 1px; box-sizing: border-box; }
.vbar button { width: 23px; height: 22px; }
.vsep { height: 1px; background: #999; margin: 2px 2px 3px; }

.doc { flex: 1; min-width: 0; display: flex; flex-direction: column; border: 1px solid #aaa; border-width: 2px 2px 0 1px; margin-top: 1px; }
.view { flex: 1; min-height: 0; display: flex; }
.canvas { flex: 1; position: relative; background: #222830; overflow: hidden; }
.viewlabel { color: #eee; padding: 5px 3px; }
.drawing { position: absolute; left: 0; top: 0; width: 100%; height: 100%; fill: none; stroke: #fff; stroke-width: 1; }
.drawing text { font: 300 24px "Open Sans", sans-serif; fill: #fff; stroke: none; }
.ucs { position: absolute; left: 10px; bottom: 0; fill: none; stroke: #fff; }
.ucs text { font: 300 18px "Open Sans", sans-serif; fill: #fff; stroke: none; }
.vscroll { width: 16px; background: #f0f0f0; display: flex; flex-direction: column; align-items: center; padding: 5px 0 158px; box-sizing: border-box; justify-content: space-between; }
.vscroll i { width: 15px; height: 17px; background: #cdcdcd; }
.vscroll svg, .hscroll svg { fill: none; stroke: #444; stroke-width: 2; }
.tabs { display: flex; align-items: center; height: 17px; background: #f0f0f0; border-bottom: 1px solid #fff; box-sizing: border-box; flex: none; margin-bottom: 5px; }
.nav { width: 14px; height: 15px; border: 1px solid #aaa; border-left-color: #fff; box-sizing: border-box; }
.nav svg { width: 8px; height: 9px; fill: #555; }
.tab { height: 16px; padding: 0 2px 0 5px; }
.tab.on { color: #fff; background: #222830; clip-path: polygon(0 0, 100% 0, 88% 100%, 12% 100%); padding: 0 10px; margin-right: 1px; }
.slash { width: 8px; height: 16px; stroke: #333; }
.hscroll { display: flex; align-items: center; margin-left: auto; width: 219px; }
.split { width: 5px; height: 13px; background: #ccc; margin-right: 4px; }
.thumb { width: 17px; height: 13px; background: #cdcdcd; margin-left: 91px; }

.palette { width: 172px; display: flex; flex: none; margin-top: 3px; overflow: hidden; }
.ptabs { width: 23px; padding-top: 25px; flex: none; }
.ptabs button { width: 23px; height: 50px; background: #cbcbcb; border: 1px solid #444; border-width: 1px 0 0 1px; border-radius: 4px 0 0 4px; box-sizing: border-box; }
.ptabs span { writing-mode: vertical-rl; text-orientation: sideways; transform: rotate(180deg); }
.pbody { flex: 1; display: flex; flex-direction: column; min-width: 0; background: #999; border-radius: 4px 4px 0 0; }
h2 { display: flex; align-items: center; height: 23px; flex: none; padding-left: 3px; gap: 6px; white-space: nowrap; }
.dots { width: 4px; height: 12px; background: radial-gradient(circle, #222 40%, transparent 60%) 0 0 / 2px 3px; }
.pscroll { flex: 1; min-height: 0; display: flex; background: #f0f0f0; border-radius: 4px 4px 0 0; }
.plist { flex: 1; overflow: hidden; padding: 0 4px; min-width: 0; }
h3 { padding: 14px 0 12px; height: 16px; }
.plist button { height: 42px; gap: 4px; padding-left: 8px; white-space: nowrap; }
.lico { width: 30px; height: 24px; fill: none; stroke-width: 1.2; overflow: visible; }
hr { border: 0; border-top: 1px solid #111; margin: 9px 0 8px; }
.ptrack { width: 11px; padding: 5px 1px 57px 0; box-sizing: border-box; flex: none; }
.ptrack i { height: 100%; background: #b2b2b2; }

.cmd { display: flex; height: 56px; flex: none; }
.cmdside { width: 23px; flex: none; display: flex; flex-direction: column; align-items: center; gap: 7px; background: linear-gradient(#7c7c7c, #4b4b4b); padding-top: 4px; box-sizing: border-box; }
.cmdside svg { fill: none; stroke: #fff; }
.dotrow { width: 17px; height: 5px; background: radial-gradient(circle, #ccc 40%, transparent 50%) 0 0 / 3px 3px; }
.cmdmain { flex: 1; min-width: 0; }
.log { height: 33px; background: #c8c8c8; border-bottom: 1px solid #888; box-sizing: border-box; padding: 2px 3px; font: 12px/15px "DejaVu Sans Mono", "Noto Sans CJK SC", monospace; }
.prompt { display: flex; align-items: center; height: 23px; background: #fff; padding-left: 5px; gap: 3px; }
.prompt button { width: 15px; height: 13px; border: 1px solid #aab2ba; background: #e8ecf0; box-sizing: border-box; }
.prompt svg { fill: none; stroke: #333; }
.prompt .tri { border-width: 3px 3px 0; border-top-color: #777; }
.prompt input { flex: 1; border: 0; outline: 0; padding: 0 0 0 4px; font: italic 13px/18px "Noto Sans CJK SC", sans-serif; background: none; }
.prompt input::placeholder { color: #999; }

.status { display: flex; height: 23px; flex: none; border-top: 2px solid #222; background: #aaa; box-sizing: border-box; }
.status output { width: 217px; flex: none; padding-left: 12px; box-sizing: border-box; color: #a5a5a5; font: 10px/22px "DejaVu Sans Mono", monospace; background: linear-gradient(#7b7b7b, #929292); }
.status button { padding: 0 2px; border-left: 1px solid #444; background: linear-gradient(#c4c4c4, #a9a9a9); }
.status button.latin { font: 10px/16px "DejaVu Sans Mono", monospace; }
.status button.on { background: linear-gradient(#dff2f4, #8fccd6); }

.behind { width: 8px; flex: none; display: flex; flex-direction: column; gap: 74px; padding-top: 54px; background: linear-gradient(90deg, #bbb, #eee 5px, #f4f4f4); overflow: hidden; }
.behind a { color: #2a50b8; text-decoration: none; width: 12px; }
.brand { position: absolute; right: 0; bottom: 0; width: 277px; height: 142px; box-sizing: border-box; background: #fdfdfd; display: flex; align-items: center; gap: 2px; padding-left: 25px; }
.brandtext { display: flex; flex-direction: column; color: #111; white-space: nowrap; padding-top: 6px; }
.brandtext strong { font: italic 900 30px/34px "Noto Sans CJK SC", sans-serif; }
.brandtext span { font: italic 600 20px/24px "Open Sans", sans-serif; }
</style>
